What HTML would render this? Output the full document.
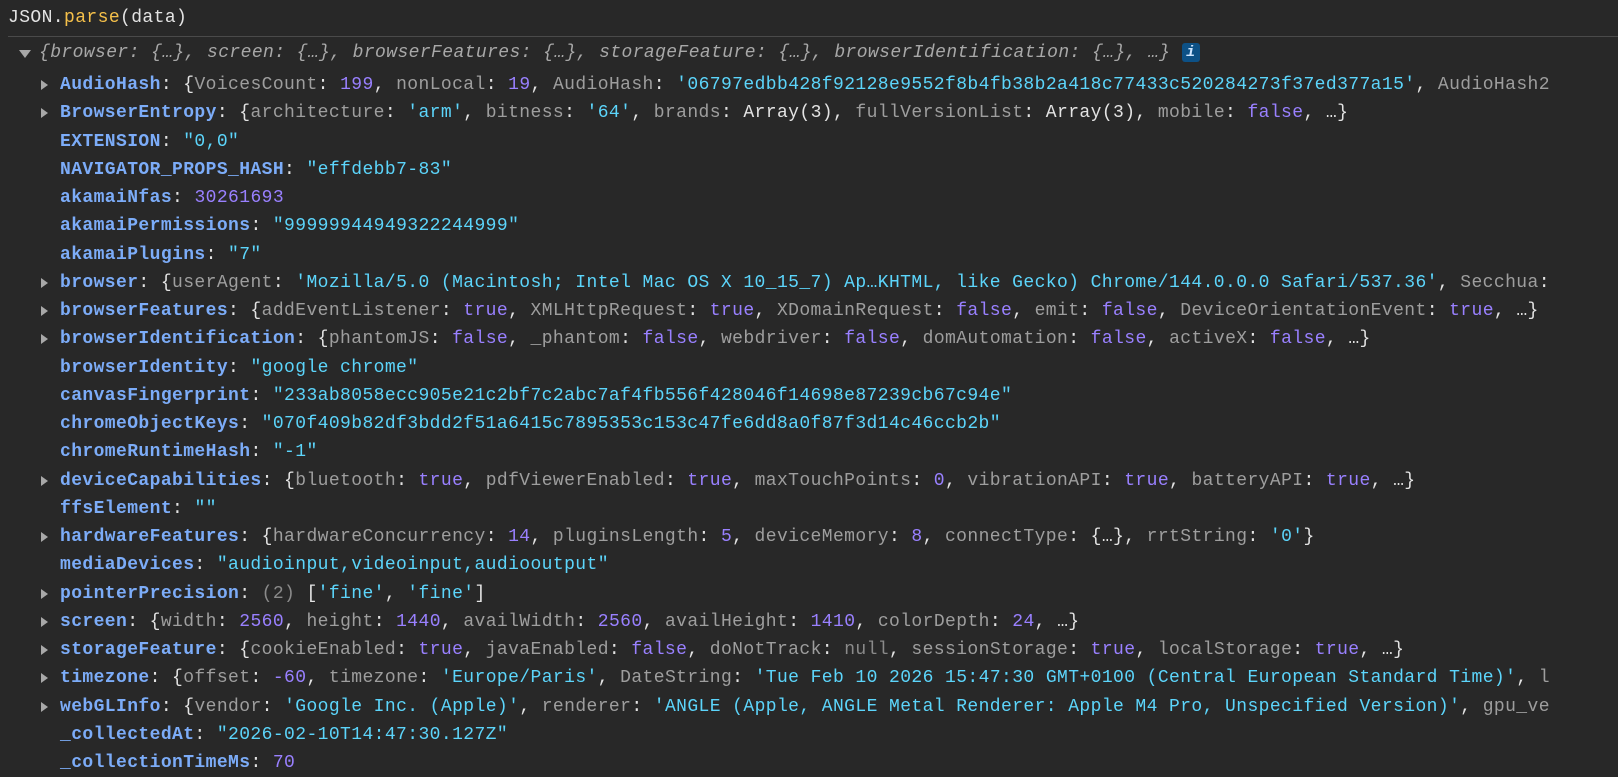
<!DOCTYPE html>
<html><head><meta charset="utf-8"><style>
html,body{margin:0;padding:0;background:#282828;width:1618px;height:773px;overflow:hidden}
body{font-family:"Liberation Mono","DejaVu Sans Mono",monospace;font-size:18px;letter-spacing:.4px;color:#e3e3e3}
.l{position:absolute;white-space:pre;height:28px;line-height:28px}
.k{color:#7cacf8;font-weight:bold}
.p{color:#9e9e9e}
.s{color:#5cd5fb}
.n{color:#9980ff}
.g{color:#8a8a8a}
.y{color:#f5c04a}
.t{position:absolute;width:0;height:0;border-top:5px solid transparent;border-bottom:5px solid transparent;border-left:7px solid #a8a8a8}
.d{position:absolute;width:0;height:0;border-left:6px solid transparent;border-right:6px solid transparent;border-top:8px solid #a8a8a8}
.i{display:inline-block;width:18px;height:19px;background:#0d5186;color:#cfe6ff;border-radius:3px;text-align:center;line-height:19px;font-style:italic;font-weight:bold;font-size:15px;vertical-align:1px;letter-spacing:0}
.sep{position:absolute;left:8px;right:0;top:36px;height:1px;background:#4a4a4a}
</style></head><body>
<div class="l" style="left:8px;top:4px">JSON.<span class="y">parse</span>(data)</div>
<div class="sep"></div>
<div class="d" style="left:19px;top:50px"></div>
<div class="l" style="left:39px;top:39px;font-style:italic;color:#a8a8a8">{browser: {…}, screen: {…}, browserFeatures: {…}, storageFeature: {…}, browserIdentification: {…}, …} <span class="i">i</span></div>
<div id="rows"></div>
<script>
const rows=[
[1,'<span class="k">AudioHash</span>: {<span class="p">VoicesCount</span>: <span class="n">199</span>, <span class="p">nonLocal</span>: <span class="n">19</span>, <span class="p">AudioHash</span>: <span class="s">\'06797edbb428f92128e9552f8b4fb38b2a418c77433c520284273f37ed377a15\'</span>, <span class="p">AudioHash2</span>'],
[1,'<span class="k">BrowserEntropy</span>: {<span class="p">architecture</span>: <span class="s">\'arm\'</span>, <span class="p">bitness</span>: <span class="s">\'64\'</span>, <span class="p">brands</span>: Array(3), <span class="p">fullVersionList</span>: Array(3), <span class="p">mobile</span>: <span class="n">false</span>, …}'],
[0,'<span class="k">EXTENSION</span>: <span class="s">"0,0"</span>'],
[0,'<span class="k">NAVIGATOR_PROPS_HASH</span>: <span class="s">"effdebb7-83"</span>'],
[0,'<span class="k">akamaiNfas</span>: <span class="n">30261693</span>'],
[0,'<span class="k">akamaiPermissions</span>: <span class="s">"99999944949322244999"</span>'],
[0,'<span class="k">akamaiPlugins</span>: <span class="s">"7"</span>'],
[1,'<span class="k">browser</span>: {<span class="p">userAgent</span>: <span class="s">\'Mozilla/5.0 (Macintosh; Intel Mac OS X 10_15_7) Ap…KHTML, like Gecko) Chrome/144.0.0.0 Safari/537.36\'</span>, <span class="p">Secchua</span>:'],
[1,'<span class="k">browserFeatures</span>: {<span class="p">addEventListener</span>: <span class="n">true</span>, <span class="p">XMLHttpRequest</span>: <span class="n">true</span>, <span class="p">XDomainRequest</span>: <span class="n">false</span>, <span class="p">emit</span>: <span class="n">false</span>, <span class="p">DeviceOrientationEvent</span>: <span class="n">true</span>, …}'],
[1,'<span class="k">browserIdentification</span>: {<span class="p">phantomJS</span>: <span class="n">false</span>, <span class="p">_phantom</span>: <span class="n">false</span>, <span class="p">webdriver</span>: <span class="n">false</span>, <span class="p">domAutomation</span>: <span class="n">false</span>, <span class="p">activeX</span>: <span class="n">false</span>, …}'],
[0,'<span class="k">browserIdentity</span>: <span class="s">"google chrome"</span>'],
[0,'<span class="k">canvasFingerprint</span>: <span class="s">"233ab8058ecc905e21c2bf7c2abc7af4fb556f428046f14698e87239cb67c94e"</span>'],
[0,'<span class="k">chromeObjectKeys</span>: <span class="s">"070f409b82df3bdd2f51a6415c7895353c153c47fe6dd8a0f87f3d14c46ccb2b"</span>'],
[0,'<span class="k">chromeRuntimeHash</span>: <span class="s">"-1"</span>'],
[1,'<span class="k">deviceCapabilities</span>: {<span class="p">bluetooth</span>: <span class="n">true</span>, <span class="p">pdfViewerEnabled</span>: <span class="n">true</span>, <span class="p">maxTouchPoints</span>: <span class="n">0</span>, <span class="p">vibrationAPI</span>: <span class="n">true</span>, <span class="p">batteryAPI</span>: <span class="n">true</span>, …}'],
[0,'<span class="k">ffsElement</span>: <span class="s">""</span>'],
[1,'<span class="k">hardwareFeatures</span>: {<span class="p">hardwareConcurrency</span>: <span class="n">14</span>, <span class="p">pluginsLength</span>: <span class="n">5</span>, <span class="p">deviceMemory</span>: <span class="n">8</span>, <span class="p">connectType</span>: {…}, <span class="p">rrtString</span>: <span class="s">\'0\'</span>}'],
[0,'<span class="k">mediaDevices</span>: <span class="s">"audioinput,videoinput,audiooutput"</span>'],
[1,'<span class="k">pointerPrecision</span>: <span class="g">(2)</span> [<span class="s">\'fine\'</span>, <span class="s">\'fine\'</span>]'],
[1,'<span class="k">screen</span>: {<span class="p">width</span>: <span class="n">2560</span>, <span class="p">height</span>: <span class="n">1440</span>, <span class="p">availWidth</span>: <span class="n">2560</span>, <span class="p">availHeight</span>: <span class="n">1410</span>, <span class="p">colorDepth</span>: <span class="n">24</span>, …}'],
[1,'<span class="k">storageFeature</span>: {<span class="p">cookieEnabled</span>: <span class="n">true</span>, <span class="p">javaEnabled</span>: <span class="n">false</span>, <span class="p">doNotTrack</span>: <span class="g">null</span>, <span class="p">sessionStorage</span>: <span class="n">true</span>, <span class="p">localStorage</span>: <span class="n">true</span>, …}'],
[1,'<span class="k">timezone</span>: {<span class="p">offset</span>: <span class="n">-60</span>, <span class="p">timezone</span>: <span class="s">\'Europe/Paris\'</span>, <span class="p">DateString</span>: <span class="s">\'Tue Feb 10 2026 15:47:30 GMT+0100 (Central European Standard Time)\'</span>, <span class="p">l</span>'],
[1,'<span class="k">webGLInfo</span>: {<span class="p">vendor</span>: <span class="s">\'Google Inc. (Apple)\'</span>, <span class="p">renderer</span>: <span class="s">\'ANGLE (Apple, ANGLE Metal Renderer: Apple M4 Pro, Unspecified Version)\'</span>, <span class="p">gpu_ve</span>'],
[0,'<span class="k">_collectedAt</span>: <span class="s">"2026-02-10T14:47:30.127Z"</span>'],
[0,'<span class="k">_collectionTimeMs</span>: <span class="n">70</span>']
];
let h='';
rows.forEach((r,i)=>{const top=71+i*28.25;
if(r[0])h+='<div class="t" style="left:41px;top:'+(top+9)+'px"></div>';
h+='<div class="l" style="left:60px;top:'+top+'px">'+r[1]+'</div>';});
document.getElementById('rows').outerHTML=h;
</script>
</body></html>
